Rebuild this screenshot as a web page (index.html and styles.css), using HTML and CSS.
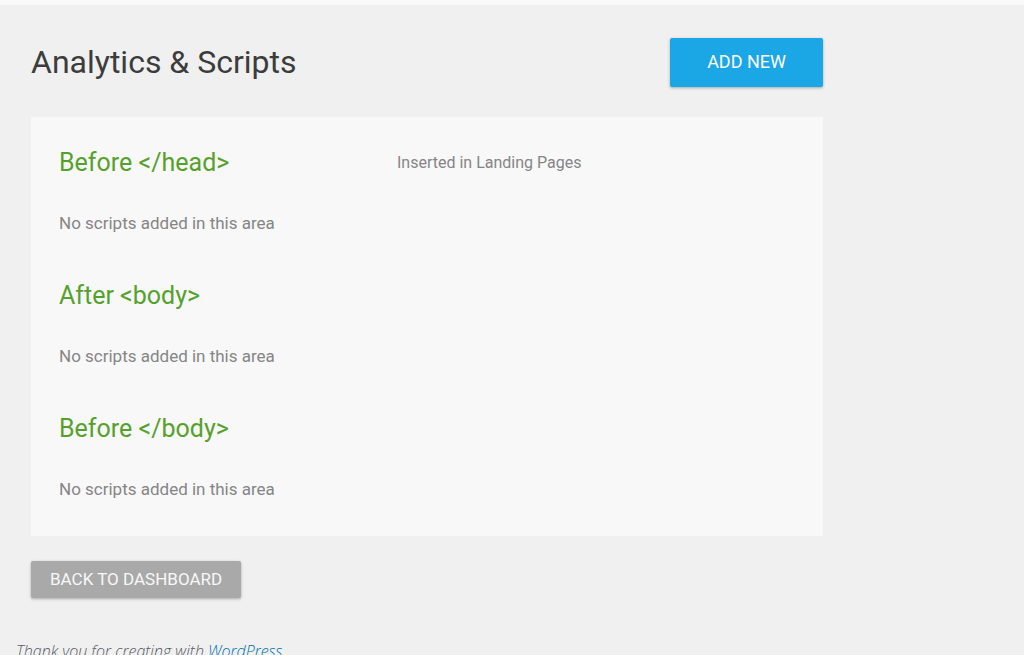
FILE: index.html
```html
<!DOCTYPE html>
<html lang="en">
<head>
<meta charset="utf-8">
<title>Analytics &amp; Scripts</title>
<link rel="stylesheet" href="styles.css">
</head>
<body>
<div class="topbar"></div>
<main class="page">
  <header class="page-header">
    <h1 class="page-title">Analytics &amp; Scripts</h1>
    <button class="button button-primary" type="button">ADD NEW</button>
  </header>
  <div class="panel">
    <section class="area">
      <h2 class="area-title">Before &lt;/head&gt;</h2>
      <p class="area-column">Inserted in Landing Pages</p>
      <p class="area-empty">No scripts added in this area</p>
    </section>
    <section class="area">
      <h2 class="area-title">After &lt;body&gt;</h2>
      <p class="area-empty">No scripts added in this area</p>
    </section>
    <section class="area">
      <h2 class="area-title">Before &lt;/body&gt;</h2>
      <p class="area-empty">No scripts added in this area</p>
    </section>
  </div>
  <button class="button button-back" type="button">BACK TO DASHBOARD</button>
</main>
<footer class="footer">Thank you for creating with <a class="footer-link" href="#">WordPress</a>.</footer>
</body>
</html>
```
FILE: styles.css
```css
* { box-sizing: border-box; }
body {
  margin: 0;
  background: #f0f0f0;
  color: #858585;
  font-family: Roboto, sans-serif;
  overflow: hidden;
}
.topbar { height: 5px; background: #f9f9f9; }
.page {
  max-width: 854px;
  padding: 33px 31px 0;
}
.page-header {
  display: flex;
  align-items: center;
  justify-content: space-between;
  margin-bottom: 30px;
}
.page-title {
  margin: 0;
  padding-bottom: 2px;
  color: #3c3c3c;
  font-size: 32px;
  font-weight: 400;
  line-height: 46px;
}
.button {
  border: 0;
  border-radius: 2px;
  color: #fff;
  font-family: inherit;
  box-shadow: 0 1px 3px rgba(0, 0, 0, 0.3);
}
.button-primary {
  height: 49px;
  padding: 0 37px 2px;
  background: #1ba6e6;
  font-size: 18px;
}
.button-back {
  height: 37px;
  margin-top: 25px;
  padding: 0 19px 2px;
  background: #a9a9a9;
  color: #f8f8f8;
  font-size: 17px;
}
.panel {
  display: grid;
  gap: 40px;
  padding: 27px 28px 33px;
  background: #f8f8f9;
}
.area {
  display: grid;
  grid-template-columns: 338px 1fr;
  row-gap: 27px;
  align-items: center;
}
.area-title {
  margin: 0;
  color: #56a12c;
  font-size: 25px;
  font-weight: 400;
  line-height: 38px;
}
.area-column { margin: 0; font-size: 16px; line-height: 28px; }
.area-empty {
  grid-column: 1;
  margin: 0;
  font-size: 17px;
  line-height: 28px;
}
.footer {
  padding: 41px 16px 0;
  color: #555d66;
  font-family: "Open Sans", sans-serif;
  font-size: 16px;
  font-style: italic;
  font-weight: 300;
  line-height: 24px;
}
.footer-link { color: #0073aa; }
```
